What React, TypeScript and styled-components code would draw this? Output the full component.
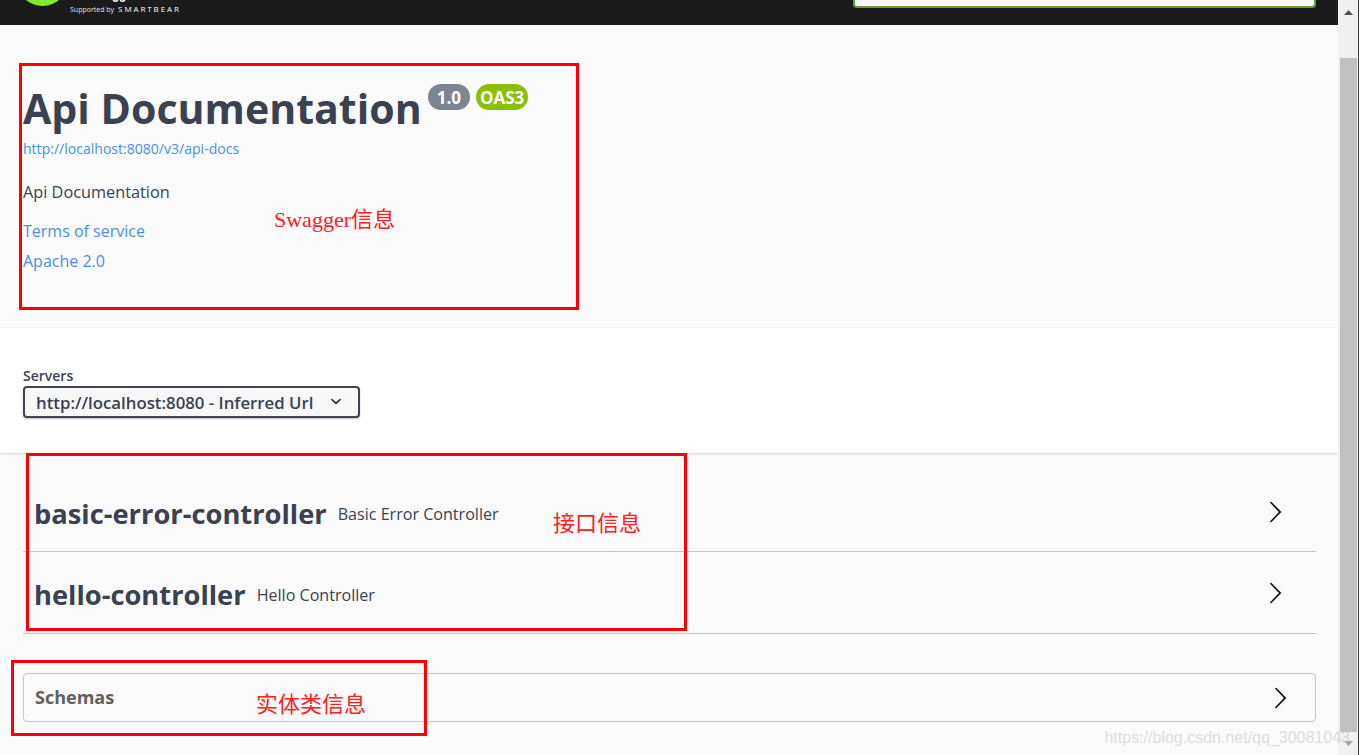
import React from "react";
import styled, { createGlobalStyle } from "styled-components";

const GlobalStyle = createGlobalStyle`
  html, body {
    margin: 0;
    padding: 0;
    height: 100%;
    overflow: hidden;
    background: #fafafa;
    font-family: "Open Sans", "Noto Sans", sans-serif;
    color: #3b4151;
  }
  #root {
    height: 100%;
  }
`;

const Page = styled.div`
  position: relative;
  display: flex;
  height: 755px;
  overflow: hidden;
`;

const Main = styled.main`
  flex: 1;
  min-width: 0;
  display: flex;
  flex-direction: column;
`;

const Topbar = styled.header`
  height: 25px;
  flex: none;
  background: #1b1b1b;
  display: flex;
  align-items: flex-start;
  justify-content: space-between;
  padding: 0 22px 0 26px;
  box-sizing: border-box;
  overflow: hidden;
`;

const Logo = styled.div`
  display: flex;
  align-items: flex-start;
  gap: 11px;
`;

const LogoColumn = styled.div`
  display: flex;
  flex-direction: column;
`;

const LogoText = styled.div`
  display: flex;
  align-items: baseline;
  gap: 4px;
  color: #fff;
  white-space: nowrap;
  margin-top: 2px;
  line-height: 9px;
`;

const Supported = styled.span`
  font-size: 7px;
  color: #e2e2e2;
`;

const Bear = styled.span`
  font-size: 8px;
  letter-spacing: 1.9px;
`;

const SearchInput = styled.div`
  width: 463px;
  height: 8px;
  box-sizing: border-box;
  background: #f7f7f7;
  border: 2px solid #62a03f;
  border-top: 0;
  border-radius: 0 0 4px 4px;
`;

const InfoSection = styled.section`
  height: 302px;
  flex: none;
  box-sizing: border-box;
  padding: 59px 23px 0;
  background: #fafafa;
`;

const TitleRow = styled.div`
  display: flex;
  align-items: flex-start;
`;

const Title = styled.h1`
  margin: 0;
  font-size: 41.1px;
  line-height: 49px;
  font-weight: 700;
  color: #3b4151;
`;

const Badge = styled.span<{ $bg: string; $pad: number }>`
  height: 26px;
  margin: 0 0 0 6px;
  padding: 0 ${(p) => p.$pad}px;
  box-sizing: border-box;
  display: inline-flex;
  align-items: center;
  justify-content: center;
  border-radius: 13px;
  background: ${(p) => p.$bg};
  color: #fff;
  font-size: 17px;
  font-weight: 700;
`;

const Link = styled.a<{ $size?: number }>`
  display: block;
  color: #4990e2;
  font-size: ${(p) => p.$size ?? 16}px;
  line-height: 22px;
  text-decoration: none;
`;

const BaseUrl = styled(Link)`
  margin-top: 5px;
`;

const Description = styled.p`
  margin: 21px 0 0;
  font-size: 16.3px;
  line-height: 22px;
`;

const InfoLinks = styled.div`
  margin-top: 17px;
  display: flex;
  flex-direction: column;
  gap: 8px;
`;

const ServersSection = styled.section`
  height: 126px;
  flex: none;
  box-sizing: border-box;
  padding: 39px 23px 0;
  background: #fff;
  border-top: 1px solid #f3f3f3;
  box-shadow: 0 1px 2px rgba(0, 0, 0, 0.15);
`;

const ServersLabel = styled.div`
  font-size: 14px;
  line-height: 17px;
  font-weight: 600;
  margin-bottom: 2px;
`;

const ServerSelect = styled.div`
  width: 337px;
  height: 32px;
  box-sizing: border-box;
  padding: 0 15px 0 11px;
  display: flex;
  align-items: center;
  justify-content: space-between;
  background: #f7f7f7;
  border: 2px solid #41444e;
  border-radius: 4px;
  box-shadow: 0 1px 2px rgba(0, 0, 0, 0.25);
  font-size: 16.8px;
  font-weight: 600;
  white-space: nowrap;
`;

const Operations = styled.section`
  flex: 1;
  padding: 19px 22px 0 23px;
`;

const TagRow = styled.div<{ $height: number }>`
  height: ${(p) => p.$height}px;
  box-sizing: border-box;
  padding: 0 29px 0 11px;
  display: flex;
  align-items: center;
  justify-content: space-between;
  border-bottom: 1px solid #c4c5c9;
`;

const TagText = styled.div`
  display: flex;
  align-items: center;
  gap: 11px;
  margin-top: 4px;
`;

const TagName = styled.span`
  font-size: 27.3px;
  line-height: 36px;
  font-weight: 700;
`;

const TagDescription = styled.span`
  font-size: 16.1px;
`;

const SchemasBox = styled.div`
  margin-top: 39px;
  height: 49px;
  box-sizing: border-box;
  padding: 0 23px 0 11px;
  display: flex;
  align-items: center;
  justify-content: space-between;
  border: 1px solid #c4c5c9;
  border-radius: 4px;
`;

const SchemasTitle = styled.span`
  font-size: 18px;
  line-height: 24px;
  margin-top: -2px;
  font-weight: 700;
  color: #606060;
`;

const Scrollbar = styled.aside`
  width: 21px;
  flex: none;
  box-sizing: border-box;
  background: #f0f0f0;
  border-right: 1px solid #3c3c3c;
  display: flex;
  flex-direction: column;
  align-items: center;
`;

const ScrollButton = styled.div<{ $height: number }>`
  height: ${(p) => p.$height}px;
  flex: none;
  width: 100%;
  display: flex;
  align-items: center;
  justify-content: center;
`;

const ScrollThumb = styled.div`
  width: 17px;
  height: 674px;
  margin-top: 34px;
  flex: none;
  background: #c0c0c0;
`;

const Annotation = styled.div<{ $x: number; $y: number; $w: number; $h: number }>`
  position: absolute;
  left: ${(p) => p.$x}px;
  top: ${(p) => p.$y}px;
  width: ${(p) => p.$w}px;
  height: ${(p) => p.$h}px;
  box-sizing: border-box;
  border: 3px solid #ff0000;
`;

const Note = styled.span<{ $x: number; $y: number }>`
  position: absolute;
  left: ${(p) => p.$x}px;
  top: ${(p) => p.$y}px;
  color: #ff2020;
  font-family: "Liberation Serif", "Noto Sans CJK SC", serif;
  font-size: 22px;
  line-height: 26px;
  white-space: nowrap;
`;

const Watermark = styled.span`
  position: absolute;
  right: 9px;
  bottom: 7px;
  color: rgba(190, 190, 190, 0.5);
  font-family: "Liberation Sans", sans-serif;
  font-size: 16px;
  line-height: 20px;
  white-space: nowrap;
`;

const Arrow = () => (
  <svg width={24} height={24} viewBox="0 0 20 20" fill="#111">
    <path d="M13.25 10L6.109 2.58a.697.697 0 0 1 0-.979.68.68 0 0 1 .969 0l7.83 7.908a.697.697 0 0 1 0 .979l-7.83 7.908a.68.68 0 0 1-.969 0 .697.697 0 0 1 0-.979L13.25 10z" />
  </svg>
);

const tags = [
  { name: "basic-error-controller", description: "Basic Error Controller", height: 80 },
  { name: "hello-controller", description: "Hello Controller", height: 82 },
];

const annotations = [
  { x: 19, y: 63, w: 560, h: 247 },
  { x: 26, y: 453, w: 661, h: 178 },
  { x: 11, y: 660, w: 416, h: 76 },
];

const notes = [
  { x: 274, y: 207, text: "Swagger信息" },
  { x: 553, y: 511, text: "接口信息" },
  { x: 256, y: 692, text: "实体类信息" },
];

export default function App() {
  return (
    <Page>
      <GlobalStyle />
      <Main>
        <Topbar>
          <Logo>
            <svg width="33" height="7" viewBox="0 0 33 7">
              <circle cx="16.5" cy="-19.7" r="25.7" fill="#85ea2d" />
            </svg>
            <LogoColumn>
              <svg width="60" height="2" viewBox="0 0 60 2">
                <path d="M43 0.2Q45.5 2.2 48 0.2M50 0.2Q52.5 2.2 55 0.2" fill="none" stroke="#fff" strokeWidth="1.4" />
              </svg>
              <LogoText>
                <Supported>Supported by</Supported>
                <Bear>SMARTBEAR</Bear>
              </LogoText>
            </LogoColumn>
          </Logo>
          <SearchInput />
        </Topbar>

        <InfoSection>
          <TitleRow>
            <Title>Api Documentation</Title>
            <Badge $bg="#7d8492" $pad={9}>1.0</Badge>
            <Badge $bg="#89bf04" $pad={4}>OAS3</Badge>
          </TitleRow>
          <BaseUrl href="#" $size={14.05}>
            http://localhost:8080/v3/api-docs
          </BaseUrl>
          <Description>Api Documentation</Description>
          <InfoLinks>
            <Link href="#">Terms of service</Link>
            <Link href="#">Apache 2.0</Link>
          </InfoLinks>
        </InfoSection>

        <ServersSection>
          <ServersLabel>Servers</ServersLabel>
          <ServerSelect>
            http://localhost:8080 - Inferred Url
            <svg width="14" height="14" viewBox="0 0 20 20" fill="#222">
              <path d="M13.418 7.859a.695.695 0 0 1 .978 0 .68.68 0 0 1 0 .969l-3.908 3.83a.697.697 0 0 1-.979 0l-3.908-3.83a.68.68 0 0 1 0-.969.695.695 0 0 1 .978 0L10 11l3.418-3.141z" transform="translate(-5.5 -6.6) scale(1.55)" />
            </svg>
          </ServerSelect>
        </ServersSection>

        <Operations>
          {tags.map((tag) => (
            <TagRow key={tag.name} $height={tag.height}>
              <TagText>
                <TagName>{tag.name}</TagName>
                <TagDescription>{tag.description}</TagDescription>
              </TagText>
              <Arrow />
            </TagRow>
          ))}
          <SchemasBox>
            <SchemasTitle>Schemas</SchemasTitle>
            <Arrow />
          </SchemasBox>
        </Operations>
      </Main>

      <Scrollbar>
        <ScrollButton $height={24}>
          <svg width="9" height="5" viewBox="0 0 9 5">
            <path d="M0 5L4.5 0L9 5z" fill="#505050" />
          </svg>
        </ScrollButton>
        <ScrollThumb />
        <ScrollButton $height={22}>
          <svg width="9" height="5" viewBox="0 0 9 5">
            <path d="M0 0L4.5 5L9 0z" fill="#a3a3a3" />
          </svg>
        </ScrollButton>
      </Scrollbar>

      {annotations.map((box) => (
        <Annotation key={box.y} $x={box.x} $y={box.y} $w={box.w} $h={box.h} />
      ))}
      {notes.map((note) => (
        <Note key={note.text} $x={note.x} $y={note.y}>
          {note.text}
        </Note>
      ))}
      <Watermark>https://blog.csdn.net/qq_30081043</Watermark>
    </Page>
  );
}
